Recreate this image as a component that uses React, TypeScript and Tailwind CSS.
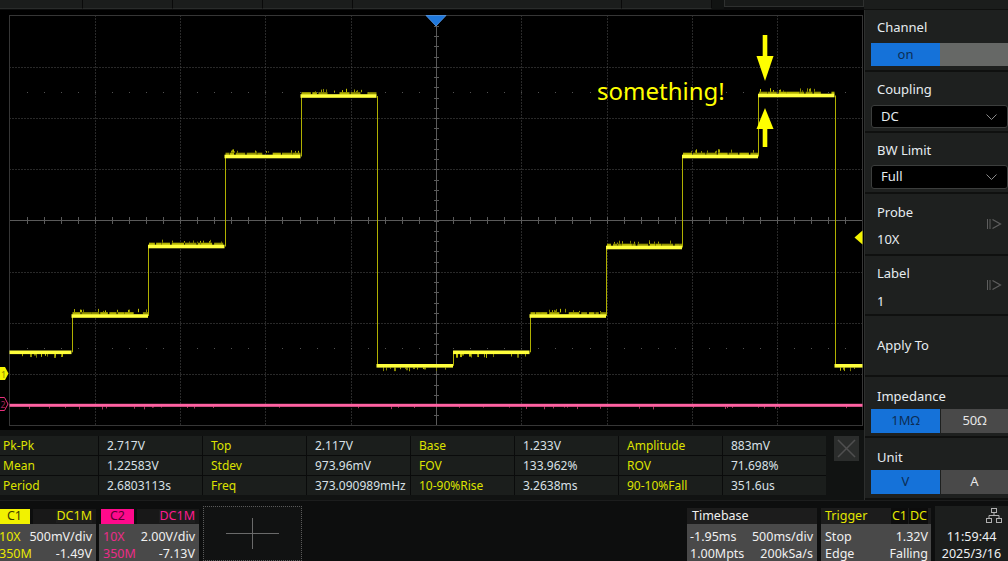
import React, { useMemo } from 'react';

function mulberry(seed: number) {
  let a = seed;
  return () => {
    a |= 0;
    a = (a + 0x6d2b79f5) | 0;
    let t = Math.imul(a ^ (a >>> 15), 1 | a);
    t = (t + Math.imul(t ^ (t >>> 7), 61 | t)) ^ t;
    return ((t ^ (t >>> 14)) >>> 0) / 4294967296;
  };
}

const SEGS: [number, number, number][] = [
  [9.5, 71.5, 352.3],
  [71.5, 148, 316],
  [148, 224.5, 246.5],
  [224.5, 300.5, 156.5],
  [300.5, 376.5, 96],
  [376.5, 453, 365.8],
  [453, 529.5, 352.3],
  [529.5, 606, 316],
  [606, 682, 247.5],
  [682, 758, 156.5],
  [758, 834.5, 95.5],
  [834.5, 862.5, 365.8],
];

function Scope() {
  const gx0 = 9.5;
  const gx1 = 862.5;
  const gy0 = 15.5;
  const gy1 = 425.5;
  const dx = (gx1 - gx0) / 10;
  const dy = (gy1 - gy0) / 8;
  const grid = useMemo(() => {
    const els: React.ReactElement[] = [];
    let k = 0;
    for (let i = 1; i < 10; i++) {
      if (i === 5) continue;
      const x = Math.round(gx0 + i * dx) + 0.5;
      els.push(<line key={k++} x1={x} y1={gy0} x2={x} y2={gy1} stroke="#525252" strokeDasharray="1 2" />);
    }
    for (let j = 1; j < 8; j++) {
      if (j === 4) continue;
      const y = Math.round(gy0 + j * dy) + 0.5;
      els.push(<line key={k++} x1={gx0} y1={y} x2={gx1} y2={y} stroke="#525252" strokeDasharray="1 2" />);
    }
    for (const yy of [92, 348]) {
      for (let i = 1; i < 50; i++) {
        const x = Math.round(gx0 + (i * dx) / 5);
        els.push(<rect key={k++} x={x} y={yy} width={1} height={1} fill="#525252" />);
      }
    }
    els.push(<line key={k++} x1={gx0} y1={220.5} x2={gx1} y2={220.5} stroke="#5a5a5a" />);
    els.push(<line key={k++} x1={436.5} y1={gy0} x2={436.5} y2={gy1} stroke="#5a5a5a" />);
    for (let i = 1; i < 50; i++) {
      const x = Math.round(gx0 + (i * dx) / 5) + 0.5;
      els.push(<line key={k++} x1={x} y1={217} x2={x} y2={224} stroke="#5a5a5a" />);
    }
    for (let j = 1; j < 40; j++) {
      const y = Math.round(gy0 + (j * dy) / 5) + 0.5;
      els.push(<line key={k++} x1={434} x2={439} y1={y} y2={y} stroke="#5a5a5a" />);
    }
    return els;
  }, []);

  const wave = useMemo(() => {
    const r = mulberry(11);
    const els: React.ReactElement[] = [];
    let k = 0;
    const noiseCols = ['#8a8a00', '#a4a400', '#c0c000', '#7a7a00'];
    SEGS.forEach(([x1, x2, y], i) => {
      const up = y < 330;
      if (up) {
        let x = x1 + 1;
        while (x < x2 - 1) {
          const w = 3 + r() * 10;
          if (r() < 0.88) {
            els.push(
              <rect key={k++} x={x} y={y - 3.8} width={Math.min(w, x2 - x)} height={2.3} fill={r() < 0.5 ? '#b2b200' : '#929200'} />
            );
          }
          x += w + r() * 2;
        }
        const n = Math.floor((x2 - x1) / 6);
        for (let j = 0; j < n; j++) {
          const tx = Math.round(x1 + 2 + r() * (x2 - x1 - 4));
          const len = 1 + r() * 2.5;
          els.push(
            <rect key={k++} x={tx} y={y - 3.8 - len} width={1} height={len} fill={noiseCols[Math.floor(r() * 4)]} />
          );
        }
      } else {
        const n = Math.floor((x2 - x1) / 5);
        for (let j = 0; j < n; j++) {
          const tx = Math.round(x1 + 2 + r() * (x2 - x1 - 4));
          const len = 1.5 + r() * 2.5;
          els.push(
            <rect key={k++} x={tx} y={y + 1.7} width={r() < 0.3 ? 2 : 1} height={len} fill={noiseCols[Math.floor(r() * 4)]} />
          );
        }
      }
      els.push(<rect key={k++} x={x1} y={y - 1.8} width={x2 - x1} height={3.6} fill="#ffff3c" />);
      if (i < SEGS.length - 1) {
        const ny = SEGS[i + 1][2];
        const x = Math.round(x2) + 0.5;
        els.push(<line key={k++} x1={x} y1={y} x2={x} y2={ny} stroke="#b0b000" strokeWidth={1} />);
      }
    });
    const n = 40;
    for (let j = 0; j < n; j++) {
      const tx = Math.round(12 + r() * 846);
      const len = 1 + r() * 2;
      els.push(<rect key={k++} x={tx} y={406.5} width={1} height={len} fill="#a8305e" />);
    }
    els.push(<rect key={k++} x={9.5} y={403.8} width={853} height={3} fill="#ff62a2" />);
    return els;
  }, []);

  return (
    <div className="relative h-[420px] w-[864px]">
      <svg width={864} height={420} viewBox="0 10 864 420" className="block">
        <rect x={0} y={10} width={864} height={420} fill="#000" />
        {grid}
        <rect x={gx0} y={gy0} width={gx1 - gx0} height={gy1 - gy0} fill="none" stroke="#363636" />
        {wave}
        <polygon points="426,15.5 446,15.5 436,26" fill="#1f78dc" stroke="#5b9ae6" strokeWidth={0.8} />
        <polygon points="854.5,237.5 862.5,230.5 862.5,244.5" fill="#f4f400" />
        <polygon points="0,367 5,367 8.5,373.5 5,380 0,380" fill="#f4f400" />
        <text x={1} y={377.5} fontSize={9} fill="#8a8a00" fontFamily="Noto Sans, sans-serif">1</text>
        <polygon points="-1,397.5 4.5,397.5 8,404 4.5,410.5 -1,410.5" fill="#000" stroke="#e8307c" strokeWidth={1} />
        <text x={0.5} y={408} fontSize={9} fill="#a02458" fontFamily="Noto Sans, sans-serif">2</text>
        <rect x={762.7} y={35} width={4.6} height={23} fill="#ffff00" />
        <polygon points="756.5,56 773.5,56 765,81" fill="#ffff00" />
        <polygon points="765,108 756.5,129 773.5,129" fill="#ffff00" />
        <rect x={762.7} y={127} width={4.6} height={20} fill="#ffff00" />
      </svg>
      <span className="absolute left-[597px] top-[69px] text-[24px] leading-none text-[#ffff00] font-['Noto_Sans',sans-serif]">
        something!
      </span>
    </div>
  );
}

const ROWS: [string, string][][] = [
  [['Pk-Pk', '2.717V'], ['Top', '2.117V'], ['Base', '1.233V'], ['Amplitude', '883mV']],
  [['Mean', '1.22583V'], ['Stdev', '973.96mV'], ['FOV', '133.962%'], ['ROV', '71.698%']],
  [['Period', '2.6803113s'], ['Freq', '373.090989mHz'], ['10-90%Rise', '3.2638ms'], ['90-10%Fall', '351.6us']],
];

function Measure() {
  return (
    <div className="h-[70px] w-[864px] bg-[#111312] pt-[6px] flex items-start">
      <div className="-ml-[5px] grid grid-cols-[repeat(8,103px)] grid-rows-[repeat(3,19px)] gap-[1px] bg-[#0a0b0b] text-[12px]">
        {ROWS.map((row, ri) =>
          row.map(([l, v], ci) => (
            <React.Fragment key={`${ri}-${ci}`}>
              <div className="bg-[#1b1e1c] pl-[8px] leading-[19px] text-[#dde200] whitespace-nowrap overflow-hidden">{l}</div>
              <div className="bg-[#1b1e1c] pl-[8px] leading-[19px] text-[#d8e0e6] whitespace-nowrap overflow-hidden">{v}</div>
            </React.Fragment>
          ))
        )}
      </div>
      <div className="ml-[8px] w-[25px] h-[25px] bg-[#2b2d2c] flex items-center justify-center">
        <svg width={19} height={19} viewBox="0 0 19 19">
          <line x1={1} y1={1} x2={18} y2={18} stroke="#4f4f4f" strokeWidth={1.6} />
          <line x1={18} y1={1} x2={1} y2={18} stroke="#4f4f4f" strokeWidth={1.6} />
        </svg>
      </div>
    </div>
  );
}

function Chevron() {
  return (
    <svg width={11} height={6} viewBox="0 0 11 6">
      <polyline points="0.5,0.5 5.5,5.5 10.5,0.5" fill="none" stroke="#8a8a8a" strokeWidth={1} />
    </svg>
  );
}

function NextIcon() {
  return (
    <svg width={15} height={10} viewBox="0 0 15 10">
      <line x1={0.5} y1={0} x2={0.5} y2={10} stroke="#5e5e5e" />
      <line x1={3} y1={0} x2={3} y2={10} stroke="#5e5e5e" />
      <polyline points="5.5,0.5 13.5,5 5.5,9.5" fill="none" stroke="#5e5e5e" strokeWidth={1.2} />
    </svg>
  );
}

function RightPanel() {
  return (
    <div className="w-[144px] h-[490px] bg-[#1e201f] border-l border-[#2c2e2d] flex flex-col text-[#e6ecf0]">
      <div className="h-[62px] border-b-2 border-[#0f100f] pt-[8px]">
        <div className="pl-[12px] leading-[18px]">Channel</div>
        <div className="mt-[7px] ml-[6px] h-[23px] flex">
          <div className="w-[69px] bg-[#1572d9] text-[#0c2d55] flex items-center justify-center">on</div>
          <div className="flex-1 bg-[#666866]" />
        </div>
      </div>
      <div className="h-[61px] border-b-2 border-[#0f100f] pt-[8px]">
        <div className="pl-[12px] leading-[18px]">Coupling</div>
        <div className="mt-[7px] ml-[6px] h-[23px] bg-black border border-[#3c3e3d] rounded-[3px] flex items-center justify-between pl-[9px] pr-[10px]">
          <span>DC</span>
          <Chevron />
        </div>
      </div>
      <div className="h-[61px] border-b-2 border-[#0f100f] pt-[8px]">
        <div className="pl-[12px] leading-[18px]">BW Limit</div>
        <div className="mt-[6px] ml-[6px] h-[24px] bg-black border border-[#3c3e3d] rounded-[3px] flex items-center justify-between pl-[9px] pr-[10px]">
          <span>Full</span>
          <Chevron />
        </div>
      </div>
      <div className="h-[62px] border-b-2 border-[#0f100f] flex justify-between items-center pr-[6px]">
        <div className="pl-[12px] self-start pt-[9px]">
          <div className="leading-[18px]">Probe</div>
          <div className="leading-[18px] mt-[9px]">10X</div>
        </div>
        <NextIcon />
      </div>
      <div className="h-[60px] border-b-2 border-[#0f100f] flex justify-between items-center pr-[6px]">
        <div className="pl-[12px] self-start pt-[8px]">
          <div className="leading-[18px]">Label</div>
          <div className="leading-[18px] mt-[10px]">1</div>
        </div>
        <NextIcon />
      </div>
      <div className="h-[61px] border-b-2 border-[#0f100f] flex items-center pl-[12px]">Apply To</div>
      <div className="h-[61px] border-b-2 border-[#0f100f] pt-[10px]">
        <div className="pl-[12px] leading-[18px]">Impedance</div>
        <div className="mt-[4px] ml-[6px] h-[24px] flex gap-[1px]">
          <div className="w-[69px] bg-[#1572d9] text-[#0c2d55] flex items-center justify-center">1MΩ</div>
          <div className="flex-1 bg-[#494949] text-[#e6e6e6] flex items-center justify-center">50Ω</div>
        </div>
      </div>
      <div className="h-[62px] border-b-2 border-[#0f100f] pt-[10px]">
        <div className="pl-[12px] leading-[18px]">Unit</div>
        <div className="mt-[4px] ml-[6px] h-[24px] flex gap-[1px]">
          <div className="w-[69px] bg-[#1572d9] text-[#0c2d55] flex items-center justify-center">V</div>
          <div className="flex-1 bg-[#494949] text-[#e6e6e6] flex items-center justify-center">A</div>
        </div>
      </div>
    </div>
  );
}

function TopBar() {
  return (
    <div className="h-[10px] flex bg-[#0c0d0d]">
      <div className="w-[83px] h-[9px] bg-[#1b1d1c] border-r border-[#0a0a0a] border-b border-b-[#2a2c2b]" />
      <div className="w-[90px] h-[9px] bg-[#1b1d1c] border-r border-[#0a0a0a] border-b border-b-[#2a2c2b]" />
      <div className="w-[90px] h-[9px] bg-[#1b1d1c] border-r border-[#0a0a0a] border-b border-b-[#2a2c2b]" />
      <div className="w-[90px] h-[9px] bg-[#1b1d1c] border-r border-[#0a0a0a] border-b border-b-[#2a2c2b]" />
      <div className="w-[269px] h-[9px] bg-[#1b1d1c] border-r border-[#0a0a0a] border-b border-b-[#2a2c2b]" />
      <div className="w-[90px] h-[9px] bg-[#1b1d1c] border-r border-[#0a0a0a] border-b border-b-[#2a2c2b]" />
      <div className="w-[12px] h-[9px] bg-[#111312]" />
      <div className="w-[140px] h-[7px] bg-[#181a19] border-x border-b border-[#2e302f] overflow-hidden relative">
        <span className="absolute left-[43px] -top-[14px] text-[13px] leading-[18px] text-[#d0d6da]">f</span>
        <span className="absolute left-[62px] -top-[14px] text-[13px] leading-[18px] text-[#d0d6da]">2.0Hz</span>
      </div>
      <div className="flex-1 h-[10px] bg-[#1b1d1c] border-b border-[#0f100f]" />
    </div>
  );
}

function ChannelBox({ ch }: { ch: 1 | 2 }) {
  const c1 = ch === 1;
  return (
    <div className={c1 ? '-ml-[5px] w-[101px] h-[55px] flex flex-col' : 'ml-[3px] w-[100px] h-[55px] flex flex-col'}>
      <div className="h-[18px] flex items-end gap-[3px] bg-[#0d0e0e]">
        <div
          className={
            c1
              ? 'w-[35px] h-[15px] bg-[#f2f200] text-[#3c3c00] flex items-center justify-center leading-none pl-[4px]'
              : 'ml-[2px] w-[33px] h-[15px] bg-[#ff0a8c] text-[#5a0030] flex items-center justify-center leading-none'
          }
        >
          {c1 ? 'C1' : 'C2'}
        </div>
        <div className="flex-1 h-[15px] bg-[#181818] flex items-center justify-end pr-[4px] leading-none">
          <span className={c1 ? 'text-[#e6e600] bg-[#1e1e1e]' : 'text-[#ff1a90] bg-[#1e1e1e]'}>DC1M</span>
        </div>
      </div>
      <div className="h-[37px] bg-[#494949] px-[4px] pt-[4px] leading-[17px]">
        <div className="flex justify-between">
          <span className={c1 ? 'text-[#e8e800]' : 'text-[#ec2c8a]'}>10X</span>
          <span className="text-[#f0f0f0]">{c1 ? '500mV/div' : '2.00V/div'}</span>
        </div>
        <div className="flex justify-between">
          <span className={c1 ? 'text-[#e8e800]' : 'text-[#ec2c8a]'}>350M</span>
          <span className="text-[#f0f0f0]">{c1 ? '-1.49V' : '-7.13V'}</span>
        </div>
      </div>
    </div>
  );
}

function BottomBar() {
  return (
    <div className="h-[61px] flex items-start pt-[5px] bg-[#0d0e0e] border-t border-[#1c1d1d] text-[12.5px]">
      <ChannelBox ch={1} />
      <ChannelBox ch={2} />
      <div className="ml-[4px] w-[99px] h-[55px] border border-dotted border-[#5a5a5a] bg-[#111212] flex items-center justify-center">
        <svg width={53} height={31} viewBox="0 0 53 31">
          <line x1={0} y1={15.5} x2={53} y2={15.5} stroke="#6a6a6a" />
          <line x1={26.5} y1={0} x2={26.5} y2={31} stroke="#6a6a6a" />
        </svg>
      </div>
      <div className="ml-[385px] w-[130px] h-[55px] flex flex-col">
        <div className="h-[18px] flex items-end bg-[#0d0e0e]">
          <div className="w-full h-[16px] bg-[#1c1c1c] text-[#f0f0f0] pl-[5px] leading-[16px]">Timebase</div>
        </div>
        <div className="h-[37px] bg-[#494949] pl-[3px] pr-[4px] pt-[4px] leading-[17px] text-[#f0f0f0]">
          <div className="flex justify-between">
            <span>-1.95ms</span>
            <span>500ms/div</span>
          </div>
          <div className="flex justify-between">
            <span>1.00Mpts</span>
            <span>200kSa/s</span>
          </div>
        </div>
      </div>
      <div className="ml-[4px] w-[110px] h-[55px] flex flex-col">
        <div className="h-[18px] flex items-end bg-[#0d0e0e]">
          <div className="w-full h-[16px] bg-[#1c1c1c] text-[#e2e600] pl-[4px] pr-[3px] leading-[16px] flex justify-between">
            <span>Trigger</span>
            <span className="flex gap-[1px]">
              <span className="bg-[#0c0c0c] px-[1px]">C1</span>
              <span className="bg-[#0c0c0c] px-[1px]">DC</span>
            </span>
          </div>
        </div>
        <div className="h-[37px] bg-[#494949] pl-[4px] pr-[3px] pt-[4px] leading-[17px] text-[#f0f0f0]">
          <div className="flex justify-between">
            <span>Stop</span>
            <span>1.32V</span>
          </div>
          <div className="flex justify-between">
            <span>Edge</span>
            <span>Falling</span>
          </div>
        </div>
      </div>
      <div className="ml-[4px] flex-1 h-[55px] bg-[#1c1e1d] flex flex-col items-center text-[#eef0f2] relative">
        <svg className="absolute right-[6px] top-[2px]" width={16} height={15} viewBox="0 0 16 15">
          <rect x={5.5} y={0.5} width={5} height={4} fill="none" stroke="#b0b0b0" />
          <line x1={8} y1={4.5} x2={8} y2={7.5} stroke="#b0b0b0" />
          <line x1={3} y1={7.5} x2={13} y2={7.5} stroke="#b0b0b0" />
          <line x1={3} y1={7.5} x2={3} y2={10.5} stroke="#b0b0b0" />
          <line x1={13} y1={7.5} x2={13} y2={10.5} stroke="#b0b0b0" />
          <rect x={0.5} y={10.5} width={5} height={4} fill="none" stroke="#b0b0b0" />
          <rect x={10.5} y={10.5} width={5} height={4} fill="none" stroke="#b0b0b0" />
        </svg>
        <div className="mt-[22px] leading-[17px]">11:59:44</div>
        <div className="leading-[17px]">2025/3/16</div>
      </div>
    </div>
  );
}

export default function App() {
  return (
    <div className="w-[1008px] h-[561px] bg-black overflow-hidden flex flex-col font-['Noto_Sans',sans-serif] text-[13px]">
      <TopBar />
      <div className="flex h-[490px]">
        <div className="w-[864px] flex flex-col">
          <Scope />
          <Measure />
        </div>
        <RightPanel />
      </div>
      <BottomBar />
    </div>
  );
}
